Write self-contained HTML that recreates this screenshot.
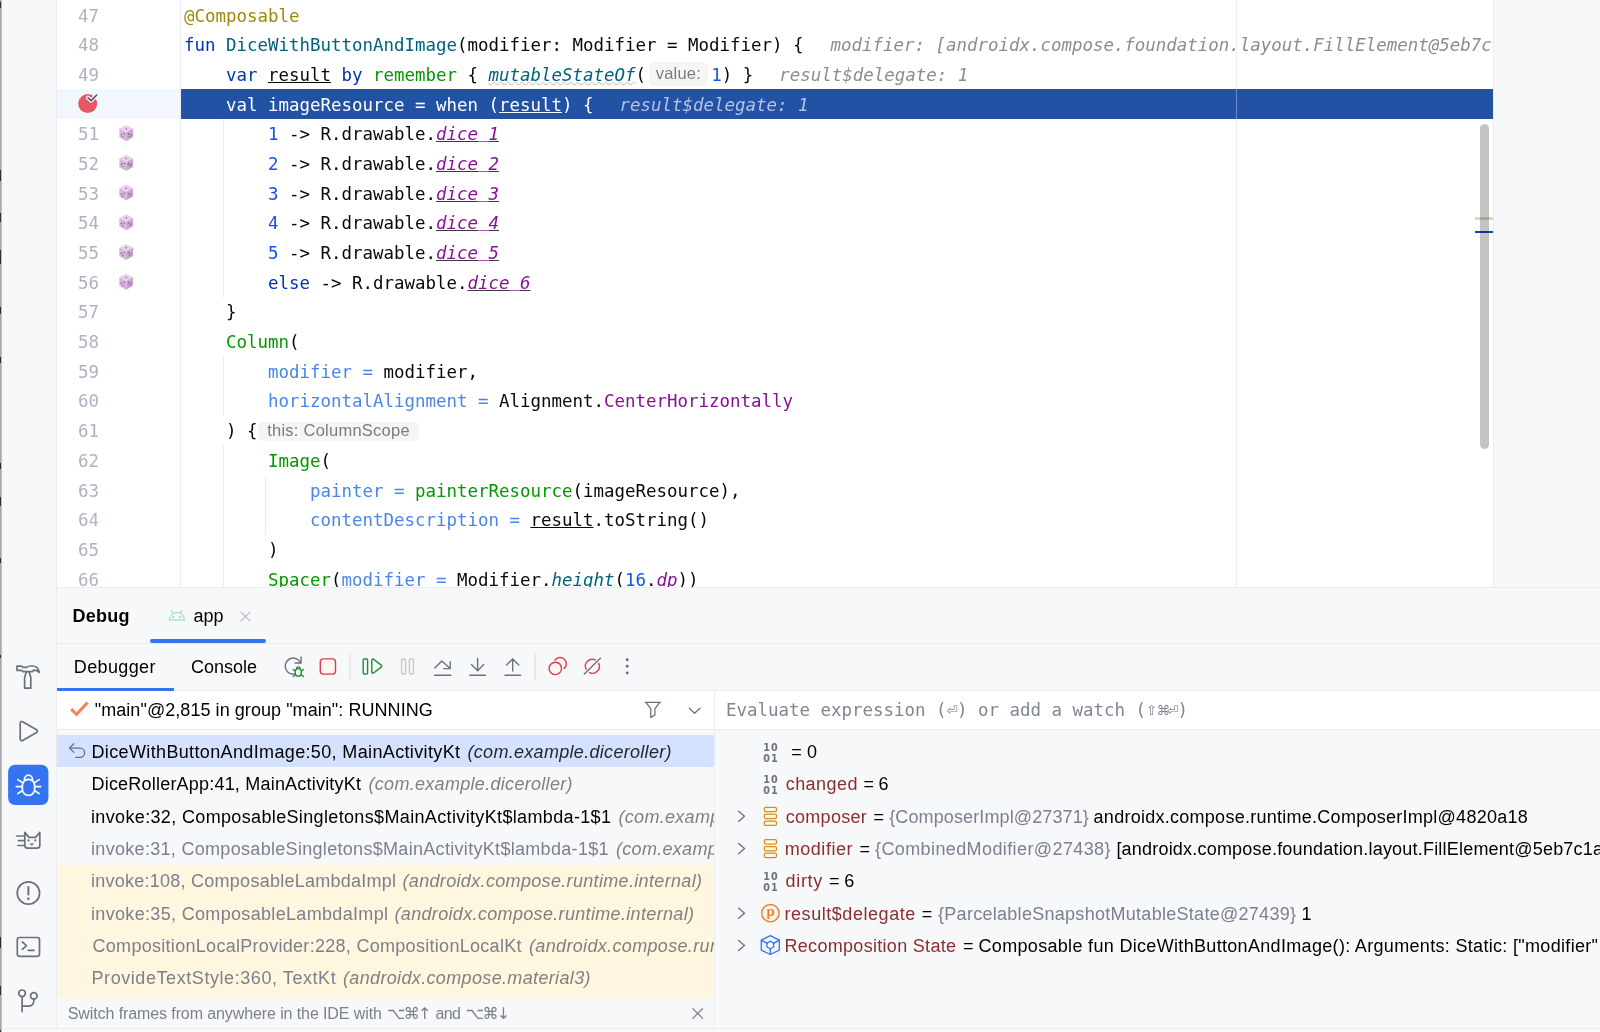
<!DOCTYPE html>
<html lang="en">
<head>
<meta charset="utf-8">
<title>Debug - MainActivity.kt</title>
<style>
*{box-sizing:border-box;margin:0;padding:0}
html,body{width:1600px;height:1032px;overflow:hidden;background:#f7f8fa}
body{position:relative;font-family:"Liberation Sans","DejaVu Sans",sans-serif;font-size:18px;color:#000}
#root{position:absolute;left:0;top:0;width:1600px;height:1032px;will-change:transform}
.abs{position:absolute}
svg{position:absolute;overflow:visible}
#edge{left:0;top:0;width:2.2px;height:1032px;background:linear-gradient(90deg,#a2a2a4 0,#b0b0b2 60%,#d6d6d8 100%)}
.mk{position:absolute;left:0;width:1.3px;background:#2c2c2e}
#side{left:0;top:0;width:56px;height:1028px;background:#f7f8fa}
#sideb{left:56px;top:0;width:1px;height:1028px;background:#ebecf0}
#editor{left:57px;top:0;width:1436px;height:587px;background:#fff;overflow:hidden}
#gutline{left:123px;top:0;width:1px;height:588px;background:#ebecf0}
#margin{left:1179px;top:0;width:1px;height:588px;background:#ebecf0}
.ln{position:absolute;left:0;width:1436px;height:29.7px;line-height:29.7px;white-space:pre;font-family:"DejaVu Sans Mono","Liberation Mono",monospace;font-size:17.44px;color:#080808}
.ln .no{position:absolute;left:21px;top:0;color:#aeb3c2}
.ln .code{position:absolute;left:127px;top:0}
.k{color:#0033b3}.an{color:#9e880d}.fn{color:#00627a}.cp{color:#009900}.nu{color:#1750eb}
.na{color:#4a86e8}.pu{color:#871094}.it{font-style:italic}
.u{text-decoration:underline;text-underline-offset:0.6px;text-decoration-thickness:1.3px}
.pu.u{text-decoration-color:#3a3a3a}
.us{display:inline-block;position:relative;top:-2px;line-height:1}
.wavy{text-decoration:underline wavy #b8b8b8;text-underline-offset:0px;text-decoration-thickness:1px}
.dbg{color:#8c8c8c;font-style:italic}
.hint{display:inline-block;font-family:"Liberation Sans","DejaVu Sans",sans-serif;font-size:16.5px;color:#7c7c7c;background:#f5f5f5;border-radius:5px;vertical-align:top;position:relative;text-align:center;overflow:hidden}
.guide{position:absolute;width:1px;background:#ebecf0}
.hl,.hl .code{color:#fff}
.hl .dbg{color:#b4c3e6}
#hlg{left:0;top:89px;width:124px;height:29.5px;background:#f2f6fd}
#hlb{left:124px;top:89px;width:1312px;height:29.5px;background:#2252a4}
#hlm{left:1179px;top:89px;width:1px;height:29.5px;background:#6d8cc6}
#sbar{left:1423px;top:124.2px;width:9.2px;height:324.6px;border-radius:5px;background:rgba(0,0,0,.23)}
#mk1{left:1417.6px;top:217px;width:18.4px;height:2.6px;background:#e3d9b0}
#mk2{left:1417.6px;top:230.7px;width:18.4px;height:2.5px;background:#0d47b5}
/* debug panel */
.hsep{position:absolute;left:57px;width:1543px;height:1px;background:#ebecf0}
#tabul{left:150px;top:639px;width:116px;height:4px;border-radius:2px;background:#3574f0}
#dbgul{left:57px;top:688px;width:117px;height:3px;background:#3574f0}
.t{position:absolute;white-space:pre;line-height:22px;height:22px}
#threads{left:57px;top:691px;width:657px;height:38px;background:#fff}
#vsep{left:714px;top:691px;width:1px;height:337px;background:#ebecf0}
#evalrow{left:715px;top:691px;width:885px;height:38px;background:#fff}
.row{position:absolute;left:57px;width:657px;height:32.3px}
.row.sel{background:#d4e2ff}
.row.y{background:#fff6df}
.sy{display:inline-block;width:10.5px;text-align:center;font-family:"DejaVu Sans",sans-serif;font-size:13.5px;line-height:10px;vertical-align:baseline;position:relative;top:-0.5px}
#botline{left:2px;top:1028px;width:1598px;height:1px;background:#ebecf0}
#clipL{left:57px;top:729px;width:657px;height:299px;overflow:hidden}
#clipR{left:715px;top:729px;width:885px;height:299px;overflow:hidden}
</style>
</head>
<body>
<div id="root">
<div id="side" class="abs"></div><div id="sideb" class="abs"></div><div id="edge" class="abs"></div>
<div class="mk" style="top:2px;height:6px"></div><div class="mk" style="top:170px;height:11px"></div><div class="mk" style="top:213px;height:9px"></div><div class="mk" style="top:250px;height:12px"></div><div class="mk" style="top:260px;height:4px"></div><div class="mk" style="top:307px;height:7px"></div><div class="mk" style="top:357px;height:6px"></div><div class="mk" style="top:463px;height:6px"></div><div class="mk" style="top:497px;height:9px"></div><div class="mk" style="top:558px;height:5px"></div><div class="mk" style="top:655px;height:3px"></div><div class="mk" style="top:937px;height:11px"></div><div class="mk" style="top:986px;height:9px"></div><div class="mk" style="top:1030px;height:2px"></div>
<svg width="56" height="1032" viewBox="0 0 56 1032" style="left:0;top:0" fill="none" stroke="#6c707e" stroke-width="1.7" stroke-linecap="round" stroke-linejoin="round">
<!-- hammer -->
<path d="M17 666.2h4.6l1.6 1.2h3.4c1-1 2.6-1.4 4.2-1.4h1.4c3.6 0 6.4 2.4 7.2 6.4c-1.6-1.6-3.6-2.2-5.6-2.2l-1.6 1.4h-9.4l-1.4-1.2H17z"/>
<path d="M26.2 672.2l-1.6 5.4v10.6h6.2v-10.6l-1.6-5.4"/>
<!-- play -->
<path d="M20.2 723.2c0-1.3 1.3-2.1 2.4-1.5l14 8c1.1.6 1.1 2.3 0 2.9l-14 8c-1.100.6-2.400-.2-2.400-1.500z"/>
<!-- bug selected -->
<rect x="8.100" y="764.700" width="40.300" height="40.400" rx="7" fill="#3574f0" stroke="none"/>
<g stroke="#fff">
<rect x="22.400" y="779.400" width="12.200" height="16" rx="6"/>
<path d="M24.400 779.800a4.100 4.700 0 0 1 8.200 0"/>
<path d="M16.400 786.600h5.400M35.200 786.600h5.400M17.800 779.600l4.400 2.800M39.200 779.600l-4.400 2.800M17.800 793.600l4.400-2.800M39.200 793.600l-4.400-2.800"/>
</g>
<!-- cat -->
<path d="M24.800 832.400l4.200 5h6.600l4.200-5v12.800a3 3 0 0 1-3 3h-9a3 3 0 0 1-3-3z"/>
<path d="M16.600 836h7.600M18.400 840.700h5.800M18 845.500h6.200"/>
<circle cx="28.500" cy="840.400" r="1.100" fill="#6c707e" stroke="none"/><circle cx="35.300" cy="840.400" r="1.100" fill="#6c707e" stroke="none"/>
<path d="M30.700 843.700h2.600l-1.300 1.500z" fill="#6c707e" stroke-width="0.8"/>
<!-- problems -->
<circle cx="28.400" cy="893" r="11.200"/>
<path d="M28.400 887v7.600" stroke-width="2"/><circle cx="28.400" cy="898.700" r="1.300" fill="#6c707e" stroke="none"/>
<!-- terminal -->
<rect x="17.300" y="937.500" width="22.200" height="18.800" rx="2.200"/>
<path d="M22.400 941.800l4 3.800l-4 3.800M28.200 950.300h5.800"/>
<!-- git -->
<circle cx="22.100" cy="993.300" r="3.300"/><circle cx="33.800" cy="995.900" r="3.300"/>
<path d="M22.100 996.800v14.800M33.800 999.400v1.400q0 5.300-5.300 5.300H22.100"/>
</svg>
<div class="hsep" style="top:587px"></div><div class="abs" style="left:1493px;top:0;width:1px;height:587px;background:#ebecf0"></div><div class="hsep" style="top:643px"></div><div class="hsep" style="top:690px"></div>
<div class="t" style="left:72.50px;top:604.76px;letter-spacing:0.250px;font-weight:bold;">Debug</div><div class="t" style="left:193.50px;top:604.76px;letter-spacing:-0.011px;">app</div><div id="tabul" class="abs"></div>
<div class="t" style="left:73.75px;top:655.76px;letter-spacing:0.384px;">Debugger</div><div class="t" style="left:191.00px;top:655.76px;letter-spacing:-0.005px;">Console</div><div id="dbgul" class="abs"></div>
<div id="threads" class="abs"></div><div class="hsep" style="top:729px"></div>
<div class="t" style="left:94.75px;top:698.51px;letter-spacing:0.057px;">&quot;main&quot;@2,815 in group &quot;main&quot;: RUNNING</div><div id="evalrow" class="abs"></div>
<div class="t" style="left:726px;top:698.72px;font-family:'DejaVu Sans Mono','Liberation Mono',monospace;font-size:17.44px;color:#818594">Evaluate expression (<span class="sy">⏎</span>) or add a watch (<span class="sy">⇧</span><span class="sy">⌘</span><span class="sy">⏎</span>)</div>
<div id="clipL" class="abs" style="left:0;top:0;width:714px;height:1028px">
<div class="row sel" style="top:734.9px;height:32.5px"></div><div class="row y" style="top:864.5px;height:133.5px"></div>
<div class="t" style="left:91.50px;top:741.10px;letter-spacing:0.359px;color:#000;">DiceWithButtonAndImage:50, MainActivityKt</div><div class="t" style="left:467.50px;top:741.10px;letter-spacing:0.302px;color:#26282e;font-style:italic;">(com.example.diceroller)</div>
<div class="t" style="left:91.50px;top:773.40px;letter-spacing:0.206px;color:#000;">DiceRollerApp:41, MainActivityKt</div><div class="t" style="left:368.50px;top:773.40px;letter-spacing:0.302px;color:#808080;font-style:italic;">(com.example.diceroller)</div>
<div class="t" style="left:91.00px;top:805.70px;letter-spacing:0.352px;color:#000;">invoke:32, ComposableSingletons$MainActivityKt$lambda-1$1</div><div class="t" style="left:618.50px;top:805.70px;letter-spacing:0.302px;color:#808080;font-style:italic;">(com.example.diceroller)</div>
<div class="t" style="left:91.00px;top:838.00px;letter-spacing:0.308px;color:#7b7f90;">invoke:31, ComposableSingletons$MainActivityKt$lambda-1$1</div><div class="t" style="left:616.00px;top:838.00px;letter-spacing:0.302px;color:#808080;font-style:italic;">(com.example.diceroller)</div>
<div class="t" style="left:91.00px;top:870.30px;letter-spacing:0.252px;color:#7b7f90;">invoke:108, ComposableLambdaImpl</div><div class="t" style="left:402.50px;top:870.30px;letter-spacing:0.334px;color:#808080;font-style:italic;">(androidx.compose.runtime.internal)</div>
<div class="t" style="left:91.00px;top:902.60px;letter-spacing:0.328px;color:#7b7f90;">invoke:35, ComposableLambdaImpl</div><div class="t" style="left:394.50px;top:902.60px;letter-spacing:0.334px;color:#808080;font-style:italic;">(androidx.compose.runtime.internal)</div>
<div class="t" style="left:92.50px;top:934.90px;letter-spacing:0.293px;color:#7b7f90;">CompositionLocalProvider:228, CompositionLocalKt</div><div class="t" style="left:529.00px;top:934.90px;letter-spacing:0.340px;color:#808080;font-style:italic;">(androidx.compose.runtime)</div>
<div class="t" style="left:91.50px;top:967.20px;letter-spacing:0.570px;color:#7b7f90;">ProvideTextStyle:360, TextKt</div><div class="t" style="left:343.00px;top:967.20px;letter-spacing:0.348px;color:#808080;font-style:italic;">(androidx.compose.material3)</div>
</div>
<div class="t" style="left:67.80px;top:1003.16px;letter-spacing:-0.101px;font-size:16px;color:#7b7f90;">Switch frames from anywhere in the IDE with</div><div class="t" style="left:387.00px;top:1003.16px;letter-spacing:-1.719px;font-size:16px;color:#7b7f90;font-family:'DejaVu Sans',sans-serif;">⌥⌘↑</div><div class="t" style="left:435.50px;top:1003.16px;letter-spacing:-0.648px;font-size:16px;color:#7b7f90;">and</div><div class="t" style="left:465.75px;top:1003.16px;letter-spacing:-1.719px;font-size:16px;color:#7b7f90;font-family:'DejaVu Sans',sans-serif;">⌥⌘↓</div><div id="vsep" class="abs"></div>
<div class="abs" style="left:715px;top:0;width:885px;height:1028px;overflow:hidden"><div class="abs" style="left:-715px;top:0;width:1700px;height:1028px">
<div class="t" style="left:791.30px;top:741.10px;letter-spacing:0.044px;">= 0</div><div class="t" style="left:785.70px;top:773.40px;letter-spacing:0.441px;color:#8c2e2e;">changed</div><div class="t" style="left:863.40px;top:773.40px;letter-spacing:-0.156px;">= 6</div><div class="t" style="left:785.75px;top:805.70px;letter-spacing:0.280px;color:#8c2e2e;">composer</div><div class="t" style="left:873.50px;top:805.70px;letter-spacing:-1.000px;">=</div><div class="t" style="left:889.25px;top:805.70px;letter-spacing:0.112px;color:#7b7f90;">{ComposerImpl@27371}</div><div class="t" style="left:1093.60px;top:805.70px;letter-spacing:0.266px;">androidx.compose.runtime.ComposerImpl@4820a18</div><div class="t" style="left:784.75px;top:838.00px;letter-spacing:0.532px;color:#8c2e2e;">modifier</div><div class="t" style="left:859.50px;top:838.00px;letter-spacing:-1.000px;">=</div><div class="t" style="left:875.00px;top:838.00px;letter-spacing:0.396px;color:#7b7f90;">{CombinedModifier@27438}</div><div class="t" style="left:1116.40px;top:838.00px;letter-spacing:0.205px;">[androidx.compose.foundation.layout.FillElement@5eb7c1a</div><div class="t" style="left:785.50px;top:870.30px;letter-spacing:0.686px;color:#8c2e2e;">dirty</div><div class="t" style="left:829.00px;top:870.30px;letter-spacing:-0.131px;">= 6</div><div class="t" style="left:784.50px;top:902.60px;letter-spacing:0.548px;color:#8c2e2e;">result$delegate</div><div class="t" style="left:921.75px;top:902.60px;letter-spacing:-1.250px;">=</div><div class="t" style="left:938.00px;top:902.60px;letter-spacing:0.283px;color:#7b7f90;">{ParcelableSnapshotMutableState@27439}</div><div class="t" style="left:1301.60px;top:902.60px;letter-spacing:-2.600px;">1</div><div class="t" style="left:784.50px;top:934.90px;letter-spacing:0.301px;color:#8c2e2e;">Recomposition State</div><div class="t" style="left:963.00px;top:934.90px;letter-spacing:-1.000px;">=</div><div class="t" style="left:978.50px;top:934.90px;letter-spacing:0.321px;">Composable fun DiceWithButtonAndImage(): Arguments: Static: [&quot;modifier&quot;</div></div></div>
<div id="botline" class="abs"></div>
<svg width="1600" height="1032" viewBox="0 0 1600 1032" style="left:0;top:0" fill="none" stroke="#6c707e" stroke-width="1.35" stroke-linecap="round" stroke-linejoin="round">
<!-- android -->
<g stroke="#a9e6c1" stroke-width="1.3">
<path d="M169.300 620a7.600 7.600 0 0 1 15.200 0z"/><path d="M171.200 610.400l2 3.200M181.900 610.400l-2 3.200"/>
<circle cx="173.300" cy="617" r="0.700" fill="#a9e6c1"/><circle cx="180" cy="617" r="0.700" fill="#a9e6c1"/>
</g>
<path d="M241.100 612.100l8.800 8.800M249.900 612.100l-8.800 8.800" stroke="#b6b9c9" stroke-width="1.300"/>
<!-- rerun debug -->
<path d="M296.800 673.200a8 8 0 1 1 3.800-10.200" stroke-width="1.400"/>
<path d="M295 663h6.100v-6" stroke-width="1.400"/>
<g stroke="#208a3c" stroke-width="1.300">
<rect x="295.300" y="668.600" width="6" height="7.600" rx="3" fill="#f2fcf3"/>
<path d="M296.400 668.800a1.900 2 0 0 1 3.800 0"/>
<path d="M293.200 669.400l2 1.600M303.400 669.400l-2 1.600M293.200 676.600l2-1.800M303.400 676.600l-2-1.800"/>
</g>
<!-- stop -->
<rect x="320.300" y="658.900" width="15.200" height="15.200" rx="3" fill="#fff5f5" stroke="#db3b4b" stroke-width="1.400"/>
<path d="M350.200 653.200v26.800M534.900 653.200v26.800" stroke="#dfe1e6" stroke-width="1.400"/>
<!-- resume -->
<g stroke="#208a3c" fill="#f2fcf3" stroke-width="1.400">
<rect x="363.200" y="659" width="4.400" height="15" rx="1"/>
<path d="M371.800 660.200c0-.9 1-1.500 1.800-1l7.600 5.900c.7.500.7 1.500 0 2l-7.600 5.900c-.8.500-1.800-.1-1.800-1z"/>
</g>
<!-- pause disabled -->
<g stroke="#c8c9ce" stroke-width="1.400"><rect x="401.600" y="659" width="4" height="15" rx="1"/><rect x="409.400" y="659" width="4" height="15" rx="1"/></g>
<!-- step over / into / out -->
<g stroke-width="1.400">
<path d="M434.600 675.200h16.200M434.800 668l7-7l8.400 7.600M443.700 668.600h6.500v-6.900"/>
<path d="M469.800 675.200h15.600M477.600 658.400v12.200M471.500 664.600l6.100 6.100l6.100-6.100"/>
<path d="M505 675.200h15.600M512.700 671v-12.200M506.600 665l6.100-6.100l6.100 6.100"/>
</g>
<!-- view breakpoints -->
<g stroke="#db3b4b" stroke-width="1.400">
<path d="M554.940 660.190a6.300 6.300 0 1 1 9.210 8.440"/>
<circle cx="555.300" cy="668.400" r="6.200" fill="#fff5f5"/>
</g>
<!-- mute breakpoints -->
<g stroke-width="1.400">
<path d="M598.740 663.340a7 7 0 0 1 -9.300 9.300M586.060 669.260a7 7 0 0 1 9.300-9.300" stroke="#db3b4b"/>
<path d="M584.300 674.100l16.100-15.800"/>
</g>
<g fill="#6c707e" stroke="none"><circle cx="627.200" cy="659.700" r="1.450"/><circle cx="627.200" cy="666.300" r="1.450"/><circle cx="627.200" cy="673" r="1.450"/></g>
<!-- thread check -->
<path d="M71.200 709.100l5.400 5.200l11-11.800" stroke="#f2875a" stroke-width="3.200" stroke-linecap="butt" stroke-linejoin="miter"/>
<!-- filter / chevron -->
<path d="M645.300 702.400h15.300M646.200 702.600l4.600 6.200v8.600l4.100-2.400v-6.200l4.600-6.200" stroke-width="1.300"/>
<path d="M689.400 708.300l5.200 5l5.300-5" stroke-width="1.300"/>
<!-- return arrow -->
<path d="M73.800 743.800l-4.400 4.300l4.400 4.300M69.600 748.100h10.400a4.600 4.600 0 0 1 0 9.200h-4.200" stroke-width="1.300"/>
<!-- hint close -->
<path d="M692.900 1008.800l9.600 9.400M702.500 1008.800l-9.600 9.400" stroke="#818594" stroke-width="1.300"/>
<path d="M738.600 811.2l5.900 5.100l-5.900 5.100" stroke-width="1.300"/>
<path d="M738.600 843.5l5.900 5.100l-5.900 5.100" stroke-width="1.300"/>
<path d="M738.600 908.1l5.900 5.100l-5.900 5.100" stroke-width="1.300"/>
<path d="M738.600 940.4l5.900 5.100l-5.900 5.100" stroke-width="1.300"/>
<rect x="764.300" y="807.4" width="12.200" height="4.300" rx="1.400" fill="#fff6e6" stroke="#d2901e" stroke-width="1.250"/><rect x="764.300" y="814.2" width="12.200" height="4.300" rx="1.400" fill="#fff6e6" stroke="#d2901e" stroke-width="1.250"/><rect x="764.300" y="821.0" width="12.200" height="4.300" rx="1.400" fill="#fff6e6" stroke="#d2901e" stroke-width="1.250"/>
<rect x="764.300" y="839.7" width="12.200" height="4.300" rx="1.400" fill="#fff6e6" stroke="#d2901e" stroke-width="1.250"/><rect x="764.300" y="846.5" width="12.200" height="4.300" rx="1.400" fill="#fff6e6" stroke="#d2901e" stroke-width="1.250"/><rect x="764.300" y="853.2" width="12.200" height="4.300" rx="1.400" fill="#fff6e6" stroke="#d2901e" stroke-width="1.250"/>
<circle cx="770.400" cy="913.2" r="8.700" fill="#fff1e5" stroke="#e8802e" stroke-width="1.400"/>
<g stroke="#3574f0" stroke-width="1.300" fill="#edf3ff"><path d="M770.300 935.6l9 4.500v10l-9 4.400l-9-4.400v-10z"/><path d="M770.300 941.3l3.300 1.800v3.900l-3.300 1.800l-3.300-1.800v-3.900z" fill="#f7f8fa"/><path d="M761.300 940.1l5.700 3.300M779.300 940.1l-5.700 3.300M770.300 948.8v5"/></g>
</svg>
<div class="t" style="left:763.2px;top:741.5px;font:9.6px/11px 'DejaVu Sans',sans-serif;letter-spacing:1.2px;color:#6c707e;height:22px;font-weight:bold">10<br>01</div><div class="t" style="left:763.2px;top:773.8px;font:9.6px/11px 'DejaVu Sans',sans-serif;letter-spacing:1.2px;color:#6c707e;height:22px;font-weight:bold">10<br>01</div><div class="t" style="left:763.2px;top:870.7px;font:9.6px/11px 'DejaVu Sans',sans-serif;letter-spacing:1.2px;color:#6c707e;height:22px;font-weight:bold">10<br>01</div><div class="t" style="left:766.6px;top:900.9px;font:bold 13.5px/22px 'Liberation Sans',sans-serif;color:#e8802e">p</div>
<div id="editor" class="abs">
<div id="hlg" class="abs"></div><div id="hlb" class="abs"></div>
<div id="gutline" class="abs"></div><div id="margin" class="abs"></div><div id="hlm" class="abs"></div>
<div id="mk1" class="abs"></div><div id="mk2" class="abs"></div><div id="sbar" class="abs"></div>
<div class="guide" style="left:166px;top:119px;height:178px"></div><div class="guide" style="left:166px;top:356px;height:60px"></div><div class="guide" style="left:166px;top:445px;height:143px"></div><div class="guide" style="left:208px;top:475px;height:60px"></div>
<div class="ln" style="top:2px"><span class="no">47</span><span class="code"><span class="an">@Composable</span></span></div>
<div class="ln" style="top:31px"><span class="no">48</span><span class="code"><span class="k">fun</span> <span class="fn">DiceWithButtonAndImage</span>(modifier: Modifier = Modifier) {<span class="dbg" style="margin-left:27px">modifier: [androidx.compose.foundation.layout.FillElement@5eb7c1a</span></span></div>
<div class="ln" style="top:61px"><span class="no">49</span><span class="code">    <span class="k">var</span> <span class="u">result</span> <span class="k">by</span> <span class="cp">remember</span> { <span class="fn it wavy">mutableStateOf</span>(<span class="hint" style="margin:0 3.5px 0 3px;width:58.8px;height:23.8px;line-height:23.8px;top:1.2px;letter-spacing:0.171px">value:</span><span class="nu">1</span>) }<span class="dbg" style="margin-left:26px">result$delegate: 1</span></span></div>
<div class="ln hl" style="top:91px"><span class="code">    val imageResource = when (<span class="u">result</span>) {<span class="dbg" style="margin-left:26px">result$delegate: 1</span></span></div>
<div class="ln" style="top:120px"><span class="no">51</span><span class="code">        <span class="nu">1</span> -&gt; R.drawable.<span class="pu it u">dice<span class="us">_</span>1</span></span></div>
<div class="ln" style="top:150px"><span class="no">52</span><span class="code">        <span class="nu">2</span> -&gt; R.drawable.<span class="pu it u">dice<span class="us">_</span>2</span></span></div>
<div class="ln" style="top:180px"><span class="no">53</span><span class="code">        <span class="nu">3</span> -&gt; R.drawable.<span class="pu it u">dice<span class="us">_</span>3</span></span></div>
<div class="ln" style="top:209px"><span class="no">54</span><span class="code">        <span class="nu">4</span> -&gt; R.drawable.<span class="pu it u">dice<span class="us">_</span>4</span></span></div>
<div class="ln" style="top:239px"><span class="no">55</span><span class="code">        <span class="nu">5</span> -&gt; R.drawable.<span class="pu it u">dice<span class="us">_</span>5</span></span></div>
<div class="ln" style="top:269px"><span class="no">56</span><span class="code">        <span class="k">else</span> -&gt; R.drawable.<span class="pu it u">dice<span class="us">_</span>6</span></span></div>
<div class="ln" style="top:298px"><span class="no">57</span><span class="code">    }</span></div>
<div class="ln" style="top:328px"><span class="no">58</span><span class="code">    <span class="cp">Column</span>(</span></div>
<div class="ln" style="top:358px"><span class="no">59</span><span class="code">        <span class="na">modifier =</span> modifier,</span></div>
<div class="ln" style="top:387px"><span class="no">60</span><span class="code">        <span class="na">horizontalAlignment =</span> Alignment.<span class="pu">CenterHorizontally</span></span></div>
<div class="ln" style="top:417px"><span class="no">61</span><span class="code">    ) {<span class="hint" style="margin-left:0.3px;width:161.4px;height:19.2px;line-height:16.4px;top:4.9px;letter-spacing:0.249px">this: ColumnScope</span></span></div>
<div class="ln" style="top:447px"><span class="no">62</span><span class="code">        <span class="cp">Image</span>(</span></div>
<div class="ln" style="top:477px"><span class="no">63</span><span class="code">            <span class="na">painter =</span> <span class="cp">painterResource</span>(imageResource),</span></div>
<div class="ln" style="top:506px"><span class="no">64</span><span class="code">            <span class="na">contentDescription =</span> <span class="u">result</span>.toString()</span></div>
<div class="ln" style="top:536px"><span class="no">65</span><span class="code">        )</span></div>
<div class="ln" style="top:566px"><span class="no">66</span><span class="code">        <span class="cp">Spacer</span>(<span class="na">modifier =</span> Modifier.<span class="fn it">height</span>(<span class="nu">16</span>.<span class="pu it">dp</span>))</span></div>
<svg width="124" height="588" viewBox="57 0 124 588" style="left:0;top:0" fill="none">
<circle cx="87.700" cy="103.600" r="9.500" fill="#e55765"/>
<path d="M88 97.700l3.200 2.900l5.500-5.600" stroke="#f2f6fd" stroke-width="4.200" stroke-linecap="round" stroke-linejoin="round"/>
<path d="M88 97.700l3.200 2.900l5.500-5.600" stroke="#4d5263" stroke-width="1.500" stroke-linecap="round" stroke-linejoin="round"/>
<g transform="translate(126.200 133.20)"><path d="M0-8l6.900 3.600L0-.6l-6.900-3.800z" fill="#ebcdf0"/><path d="M-6.900-4.400L0-.6v8.600l-6.900-4z" fill="#d6b6db"/><path d="M6.900-4.400L0-.6v8.600l6.900-4z" fill="#c7a7cc"/><g fill="#6e4b74"><circle cx="0" cy="-4.300" r=".7"/><circle cx="-4.800" cy="1.400" r=".7"/><circle cx="-2" cy="0.600" r=".7"/><circle cx="-3.400" cy="3.600" r=".6"/><circle cx="2.300" cy="0.800" r=".7"/><circle cx="4.800" cy="1.600" r=".7"/><circle cx="3.400" cy="3.200" r=".6"/></g></g>
<g transform="translate(126.200 162.90)"><path d="M0-8l6.900 3.600L0-.6l-6.900-3.800z" fill="#ebcdf0"/><path d="M-6.900-4.400L0-.6v8.600l-6.900-4z" fill="#d6b6db"/><path d="M6.900-4.400L0-.6v8.600l6.900-4z" fill="#c7a7cc"/><g fill="#6e4b74"><circle cx="0" cy="-4.300" r=".7"/><circle cx="-4.800" cy="1.400" r=".7"/><circle cx="-2" cy="0.600" r=".7"/><circle cx="-3.400" cy="3.600" r=".6"/><circle cx="2.300" cy="0.800" r=".7"/><circle cx="4.800" cy="1.600" r=".7"/><circle cx="3.400" cy="3.200" r=".6"/></g></g>
<g transform="translate(126.200 192.60)"><path d="M0-8l6.900 3.600L0-.6l-6.900-3.800z" fill="#ebcdf0"/><path d="M-6.900-4.400L0-.6v8.600l-6.900-4z" fill="#d6b6db"/><path d="M6.900-4.400L0-.6v8.600l6.900-4z" fill="#c7a7cc"/><g fill="#6e4b74"><circle cx="0" cy="-4.300" r=".7"/><circle cx="-4.800" cy="1.400" r=".7"/><circle cx="-2" cy="0.600" r=".7"/><circle cx="-3.400" cy="3.600" r=".6"/><circle cx="2.300" cy="0.800" r=".7"/><circle cx="4.800" cy="1.600" r=".7"/><circle cx="3.400" cy="3.200" r=".6"/></g></g>
<g transform="translate(126.200 222.30)"><path d="M0-8l6.900 3.600L0-.6l-6.900-3.800z" fill="#ebcdf0"/><path d="M-6.900-4.400L0-.6v8.600l-6.900-4z" fill="#d6b6db"/><path d="M6.900-4.400L0-.6v8.600l6.900-4z" fill="#c7a7cc"/><g fill="#6e4b74"><circle cx="0" cy="-4.300" r=".7"/><circle cx="-4.800" cy="1.400" r=".7"/><circle cx="-2" cy="0.600" r=".7"/><circle cx="-3.400" cy="3.600" r=".6"/><circle cx="2.300" cy="0.800" r=".7"/><circle cx="4.800" cy="1.600" r=".7"/><circle cx="3.400" cy="3.200" r=".6"/></g></g>
<g transform="translate(126.200 252.00)"><path d="M0-8l6.900 3.600L0-.6l-6.900-3.800z" fill="#ebcdf0"/><path d="M-6.900-4.400L0-.6v8.600l-6.900-4z" fill="#d6b6db"/><path d="M6.900-4.400L0-.6v8.600l6.900-4z" fill="#c7a7cc"/><g fill="#6e4b74"><circle cx="0" cy="-4.300" r=".7"/><circle cx="-4.800" cy="1.400" r=".7"/><circle cx="-2" cy="0.600" r=".7"/><circle cx="-3.400" cy="3.600" r=".6"/><circle cx="2.300" cy="0.800" r=".7"/><circle cx="4.800" cy="1.600" r=".7"/><circle cx="3.400" cy="3.200" r=".6"/></g></g>
<g transform="translate(126.200 281.70)"><path d="M0-8l6.900 3.600L0-.6l-6.900-3.800z" fill="#ebcdf0"/><path d="M-6.900-4.400L0-.6v8.600l-6.900-4z" fill="#d6b6db"/><path d="M6.900-4.400L0-.6v8.600l6.900-4z" fill="#c7a7cc"/><g fill="#6e4b74"><circle cx="0" cy="-4.300" r=".7"/><circle cx="-4.800" cy="1.400" r=".7"/><circle cx="-2" cy="0.600" r=".7"/><circle cx="-3.400" cy="3.600" r=".6"/><circle cx="2.300" cy="0.800" r=".7"/><circle cx="4.800" cy="1.600" r=".7"/><circle cx="3.400" cy="3.200" r=".6"/></g></g>
</svg>
</div>
</div>
</body>
</html>
